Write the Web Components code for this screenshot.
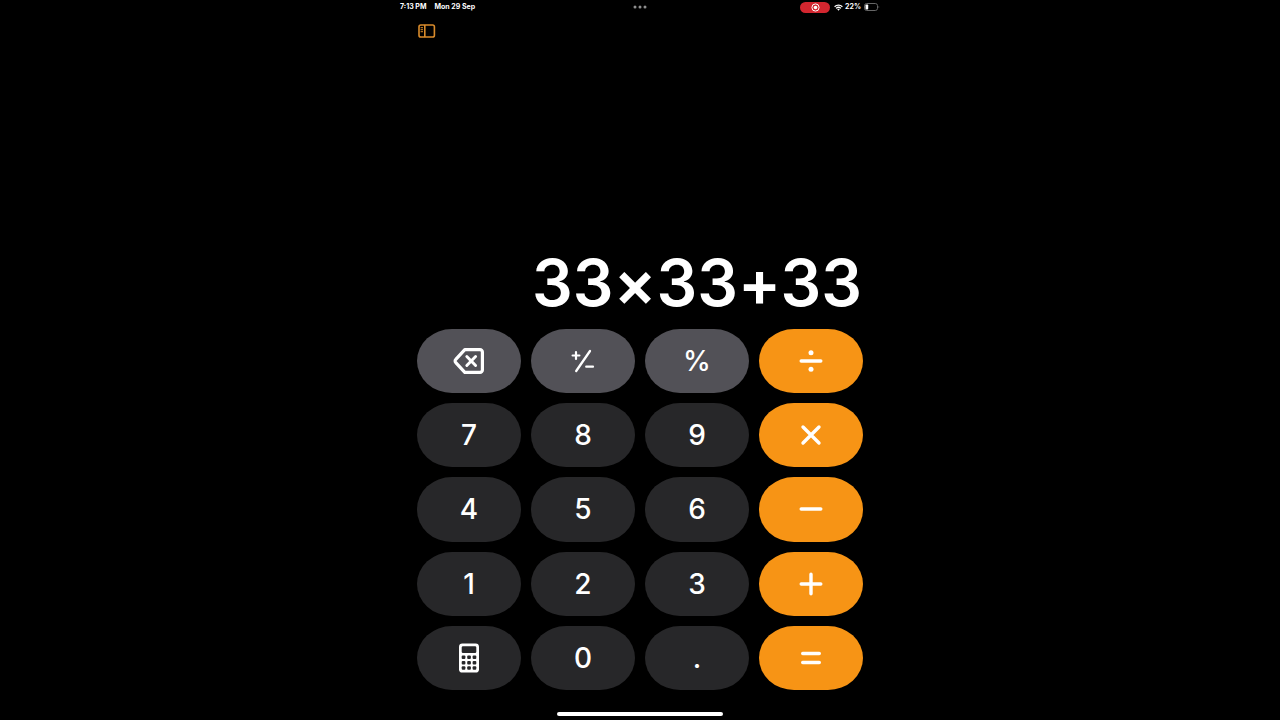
<!DOCTYPE html>
<html lang="en">
<head>
<meta charset="utf-8">
<meta name="viewport" content="width=device-width, initial-scale=1">
<title>Calculator</title>
<style>
  html { background: #000; }
  body { margin: 0; background: #000; color: #fff; font-family: Inter, "Liberation Sans", sans-serif; }
</style>
</head>
<body>
<calc-app></calc-app>

<template id="status-bar-tpl">
  <style>
    :host { display: grid; grid-template-columns: 1fr auto 1fr; align-items: center; height: 14px; font-size: 7px; line-height: 8px; font-weight: 700; white-space: nowrap; }
    .left { display: flex; gap: 8px; }
    .right { display: flex; justify-content: flex-end; align-items: center; gap: 2px; }
    .rec { display: flex; align-items: center; justify-content: center; width: 30px; height: 11px; border-radius: 6px; background: #d3262f; margin-right: 2px; }
    svg { display: block; }
  </style>
  <div class="left"><slot name="time"></slot><slot name="date"></slot></div>
  <svg width="14" height="4" viewBox="0 0 14 4" fill="#8e8e8e" aria-hidden="true"><circle cx="2" cy="2" r="1.5"/><circle cx="7" cy="2" r="1.5"/><circle cx="12" cy="2" r="1.5"/></svg>
  <div class="right">
    <span class="rec"><svg width="9" height="9" viewBox="0 0 9 9" aria-label="Recording"><circle cx="4.5" cy="4.5" r="3.6" fill="none" stroke="#fff"/><circle cx="4.5" cy="4.5" r="1.8" fill="#fff"/></svg></span>
    <svg width="9" height="7" viewBox="0 0 9 7" fill="none" stroke="#fff" stroke-width="1.3" aria-label="Wi-Fi"><path d="M.6 2.7a5.6 5.6 0 0 1 7.8 0M2.1 4.4a3.4 3.4 0 0 1 4.8 0"/><path d="M3.2 5.3a2 2 0 0 1 2.600 0L4.500 6.700z" fill="#fff" stroke="none"/></svg>
    <slot name="charge"></slot>
    <svg width="17" height="8" viewBox="0 0 17 8" aria-label="Battery"><rect x="1.500" y=".5" width="13" height="7" rx="2.200" fill="none" stroke="#666"/><rect x="2.500" y="1.500" width="2.700" height="5" rx=".8" fill="#fff"/><path d="M15.600 2.800q1.400 1.200 0 2.400z" fill="#777"/></svg>
  </div>
</template>

<template id="tool-bar-tpl">
  <style>
    :host { display: flex; padding: 10px 18px; }
    button { display: block; border: 0; padding: 0; background: none; color: #d98b2b; }
    svg { display: block; }
  </style>
  <button type="button" aria-label="Toggle sidebar">
    <svg width="18" height="14" viewBox="0 0 18 14" fill="none" stroke="currentColor" stroke-width="1.6"><rect x="1" y="1" width="15.400" height="12" rx="1.800"/><path d="M6.800 1v12"/><path d="M2.600 3.700h2.400M2.600 5.700h2.400M2.600 7.700h2.400" stroke-width="1"/></svg>
  </button>
</template>

<template id="calc-display-tpl">
  <style>
    :host { display: flex; flex: 1; align-items: flex-end; justify-content: flex-end; padding: 0 18px 6px; }
    output { font-size: 64px; line-height: 80px; font-weight: 600; font-feature-settings: "calt" 0; }
  </style>
  <output><slot></slot></output>
</template>

<template id="calc-key-tpl">
  <style>
    :host { display: block; --fill: #272729; }
    :host([kind="utility"]) { --fill: #525157; }
    :host([kind="operator"]) { --fill: #f79415; }
    button { display: flex; align-items: center; justify-content: center; width: 100%; height: 100%; border: 0; padding: 0; border-radius: 35px / 32px; background: var(--fill); color: #fff; font: inherit; font-size: 28px; line-height: 32px; font-weight: 500; }
    svg { display: block; }
  </style>
  <button type="button"><slot></slot></button>
</template>

<template id="calc-keypad-tpl">
  <style>
    :host { display: grid; grid-template-columns: repeat(4, 1fr); grid-template-rows: repeat(5, 1fr); gap: 10px; min-height: 361px; padding: 0 17px; }
    svg { display: block; fill: none; stroke: #fff; stroke-width: 3.4; stroke-linecap: round; stroke-linejoin: round; }
    .solid { fill: #fff; stroke: none; }
    .holes { fill: #272729; stroke: none; }
  </style>
  <calc-key kind="utility" label="Delete"><svg width="32" height="28" viewBox="0 0 32 28"><path d="M11.800 2.600H27a2.400 2.400 0 0 1 2.400 2.400v18a2.400 2.400 0 0 1-2.400 2.400H11.800L2.800 15.600a2.200 2.200 0 0 1 0-3.200z" stroke-width="3.200"/><path d="M13.800 9.500l8.800 9M22.600 9.500l-8.800 9" stroke-width="2.900"/></svg></calc-key>
  <calc-key kind="utility" label="Plus or minus"><svg width="24" height="24" viewBox="0 0 24 24"><path d="M19 2L5.200 22" stroke-width="2.300"/><path d="M1.600 6.500h6.800M5 3.100v6.800M15.200 17.700h6.800" stroke-width="2.200"/></svg></calc-key>
  <calc-key kind="utility">%</calc-key>
  <calc-key kind="operator" label="Divide"><svg width="26" height="26" viewBox="0 0 26 26"><path d="M3.200 13h19.600"/><circle class="solid" cx="13" cy="4.800" r="2.500"/><circle class="solid" cx="13" cy="21.200" r="2.500"/></svg></calc-key>
  <calc-key>7</calc-key>
  <calc-key>8</calc-key>
  <calc-key>9</calc-key>
  <calc-key kind="operator" label="Multiply"><svg width="26" height="26" viewBox="0 0 26 26"><path d="M5 5l16 16M21 5L5 21"/></svg></calc-key>
  <calc-key>4</calc-key>
  <calc-key>5</calc-key>
  <calc-key>6</calc-key>
  <calc-key kind="operator" label="Subtract"><svg width="26" height="26" viewBox="0 0 26 26"><path d="M3.200 13h19.600"/></svg></calc-key>
  <calc-key>1</calc-key>
  <calc-key>2</calc-key>
  <calc-key>3</calc-key>
  <calc-key kind="operator" label="Add"><svg width="26" height="26" viewBox="0 0 26 26"><path d="M3.200 13h19.600M13 3.200v19.600"/></svg></calc-key>
  <calc-key label="Calculator mode"><svg width="20" height="30" viewBox="0 0 20 30"><rect class="solid" x="0" y=".4" width="20" height="29.200" rx="3.400"/><g class="holes"><rect x="2.700" y="3.200" width="14.600" height="6.800" rx="1.300"/><rect x="2.700" y="12.500" width="3.700" height="3.500" rx="1"/><rect x="8.200" y="12.500" width="3.700" height="3.500" rx="1"/><rect x="13.600" y="12.500" width="3.700" height="3.500" rx="1"/><rect x="2.700" y="17.900" width="3.700" height="3.500" rx="1"/><rect x="8.200" y="17.900" width="3.700" height="3.500" rx="1"/><rect x="13.600" y="17.900" width="3.700" height="3.500" rx="1"/><rect x="2.700" y="23.300" width="3.700" height="3.500" rx="1"/><rect x="8.200" y="23.300" width="3.700" height="3.500" rx="1"/><rect x="13.600" y="23.300" width="3.700" height="3.500" rx="1"/></g></svg></calc-key>
  <calc-key>0</calc-key>
  <calc-key>.</calc-key>
  <calc-key kind="operator" label="Equals"><svg width="26" height="26" viewBox="0 0 26 26"><path d="M4.700 8.500h16.600M4.700 17.500h16.600"/></svg></calc-key>
</template>

<template id="home-indicator-tpl">
  <style>
    :host { display: flex; justify-content: center; padding: 22px 0 4px; }
    div { width: 166px; height: 4px; border-radius: 2px; background: #fff; }
  </style>
  <div></div>
</template>

<template id="calc-app-tpl">
  <style>
    :host { display: flex; flex-direction: column; max-width: 480px; min-height: 100vh; margin: 0 auto; }
  </style>
  <status-bar><span slot="time">7:13 PM</span><span slot="date">Mon 29 Sep</span><span slot="charge">22%</span></status-bar>
  <tool-bar></tool-bar>
  <calc-display>33×33+33</calc-display>
  <calc-keypad></calc-keypad>
  <home-indicator></home-indicator>
</template>

<script>
  class TemplateElement extends HTMLElement {
    constructor() {
      super();
      const tpl = document.getElementById(this.localName + "-tpl");
      this.attachShadow({ mode: "open" }).append(document.importNode(tpl.content, true));
    }
  }
  class StatusBar extends TemplateElement {}
  class ToolBar extends TemplateElement {}
  class CalcDisplay extends TemplateElement {}
  class CalcKey extends TemplateElement {
    connectedCallback() {
      const label = this.getAttribute("label");
      if (label) this.shadowRoot.querySelector("button").setAttribute("aria-label", label);
    }
  }
  class CalcKeypad extends TemplateElement {}
  class HomeIndicator extends TemplateElement {}
  class CalcApp extends TemplateElement {}

  customElements.define("status-bar", StatusBar);
  customElements.define("tool-bar", ToolBar);
  customElements.define("calc-display", CalcDisplay);
  customElements.define("calc-key", CalcKey);
  customElements.define("calc-keypad", CalcKeypad);
  customElements.define("home-indicator", HomeIndicator);
  customElements.define("calc-app", CalcApp);
</script>
</body>
</html>
